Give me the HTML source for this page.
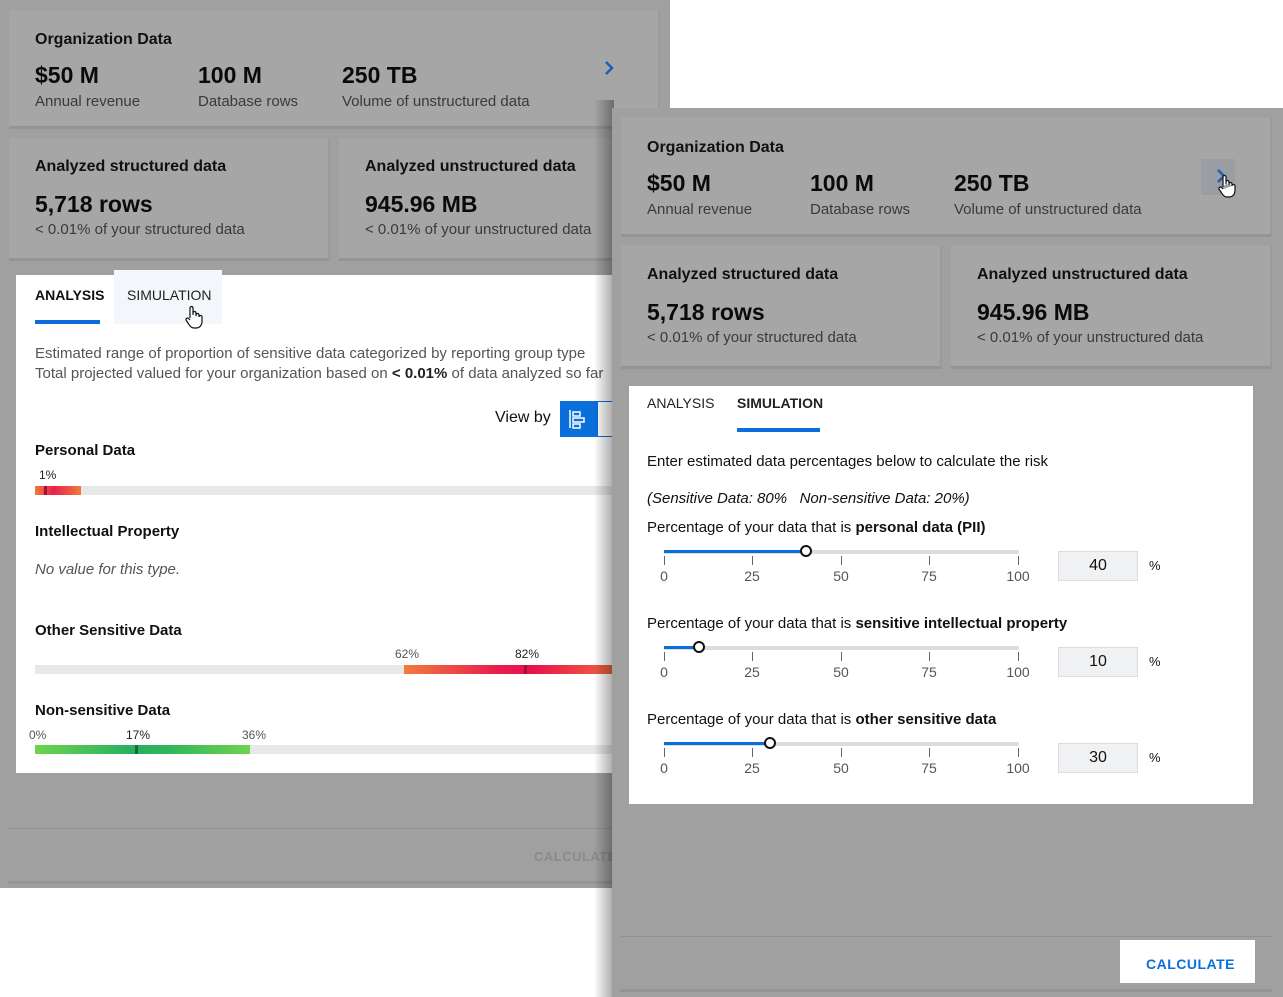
<!DOCTYPE html>
<html><head><meta charset="utf-8"><style>
*{box-sizing:border-box;margin:0;padding:0}
body{width:1283px;height:997px;background:#fff;position:relative;overflow:hidden;font-family:"Liberation Sans",sans-serif;color:#111}
.panel{position:absolute;background:#a0a0a0}
.card{position:absolute;background:#a6a6a6;border-bottom:3px solid #949494;border-right:2px solid #9a9a9a}
.t{position:absolute;white-space:nowrap}
.h{font-size:16px;font-weight:bold;color:#111}
.big{font-size:23px;font-weight:bold;color:#0a0a0a}
.sub{font-size:15px;color:#3a3a3a}
.white{position:absolute;background:#fff}
.bar{position:absolute;height:9px;background:#e8e8e8}
.seg{position:absolute;height:9px}
.pct{font-size:12px;color:#222}
.tick{position:absolute;width:1px;height:9px;background:#666}
.num{position:absolute;font-size:14px;color:#555;transform:translateX(-50%)}
.track{position:absolute;height:4px;background:#ddd}
.fill{position:absolute;height:3px;background:#0a6fdb}
.knob{position:absolute;width:12px;height:12px;border:2px solid #111;border-radius:50%;background:#fff}
.inp{position:absolute;width:80px;height:30px;background:#f0f1f2;border:1px solid #ddd;font-size:16px;text-align:center;line-height:28px;color:#111}
.hand{position:absolute}
</style></head><body>

<!-- LEFT PANEL -->
<div class="panel" style="left:0;top:0;width:670px;height:888px">
  <div class="card" style="left:9px;top:10px;width:651px;height:119px"></div>
  <div class="t h" style="left:35px;top:31px">Organization Data</div>
  <div class="t big" style="left:35px;top:62px">$50 M</div>
  <div class="t big" style="left:198px;top:62px">100 M</div>
  <div class="t big" style="left:342px;top:62px">250 TB</div>
  <div class="t sub" style="left:35px;top:93px">Annual revenue</div>
  <div class="t sub" style="left:198px;top:93px">Database rows</div>
  <div class="t sub" style="left:342px;top:93px">Volume of unstructured data</div>
  <svg style="position:absolute;left:602px;top:60px" width="14" height="16"><path d="M4 2 L10 8 L4 14" stroke="#1a5fb4" stroke-width="2.5" fill="none"/></svg>

  <div class="card" style="left:9px;top:138px;width:321px;height:123px"></div>
  <div class="card" style="left:339px;top:138px;width:321px;height:123px"></div>
  <div class="t h" style="left:35px;top:158px">Analyzed structured data</div>
  <div class="t big" style="left:35px;top:191px">5,718 rows</div>
  <div class="t sub" style="left:35px;top:221px">&lt; 0.01% of your structured data</div>
  <div class="t h" style="left:365px;top:158px">Analyzed unstructured data</div>
  <div class="t big" style="left:365px;top:191px">945.96 MB</div>
  <div class="t sub" style="left:365px;top:221px">&lt; 0.01% of your unstructured data</div>

  <div class="white" style="left:16px;top:275px;width:640px;height:498px"></div>
  <div style="position:absolute;left:114px;top:270px;width:108px;height:54px;background:#f3f6fb"></div>
  <div class="t" style="left:35px;top:287px;font-size:14px;font-weight:bold">ANALYSIS</div>
  <div style="position:absolute;left:35px;top:320px;width:65px;height:4px;background:#0a6fdb"></div>
  <div class="t" style="left:127px;top:287px;font-size:14px;color:#222">SIMULATION</div>
  <svg class="hand" style="left:184px;top:305px" width="20" height="24" viewBox="0 0 20 24"><path d="M6 13V3a1.5 1.5 0 0 1 3 0v7M9 10V8a1.5 1.5 0 0 1 3 0v3M12 10a1.5 1.5 0 0 1 3 0v2M15 12a1.5 1.5 0 0 1 3 0v4c0 4-2 7-6 7h-2c-3 0-4-2-6-5l-2-3a1.5 1.5 0 0 1 2.5-1.5L6 15" fill="#fff" stroke="#111" stroke-width="1.2"/></svg>
  <div class="t" style="left:35px;top:345px;font-size:15px;color:#555">Estimated range of proportion of sensitive data categorized by reporting group type</div>
  <div class="t" style="left:35px;top:365px;font-size:15px;color:#555">Total projected valued for your organization based on <b style="color:#222">&lt; 0.01%</b> of data analyzed so far</div>
  <div class="t" style="left:495px;top:409px;font-size:16px;color:#111">View by</div>
  <div style="position:absolute;left:560px;top:401px;width:37px;height:36px;background:#0a6fdb"></div>
  <svg style="position:absolute;left:568px;top:409px" width="20" height="20"><path d="M2 1V19M5 3h7v4H5zM5 9h11v4H5zM5 15h7v4H5z" stroke="#fff" stroke-width="1.5" fill="none"/></svg>
  <div style="position:absolute;left:597px;top:401px;width:30px;height:36px;border:1px solid #0a6fdb;background:#fff"></div>

  <div class="t h" style="left:35px;top:442px;font-size:15px">Personal Data</div>
  <div class="t pct" style="left:39px;top:468px">1%</div>
  <div class="bar" style="left:35px;top:486px;width:600px"></div>
  <div class="seg" style="left:35px;top:486px;width:46px;background:linear-gradient(90deg,#f07b3a,#e8204e 40%,#f07b3a)"></div>
  <div class="seg" style="left:44px;top:486px;width:3px;background:#a0103a"></div>

  <div class="t h" style="left:35px;top:523px;font-size:15px">Intellectual Property</div>
  <div class="t" style="left:35px;top:561px;font-size:15px;color:#555;font-style:italic">No value for this type.</div>

  <div class="t h" style="left:35px;top:622px;font-size:15px">Other Sensitive Data</div>
  <div class="t pct" style="left:395px;top:647px;color:#555">62%</div>
  <div class="t pct" style="left:515px;top:647px">82%</div>
  <div class="bar" style="left:35px;top:665px;width:600px"></div>
  <div class="seg" style="left:404px;top:665px;width:230px;background:linear-gradient(90deg,#f07b3a,#e8204e 40%,#e8104e 55%,#f07b3a)"></div>
  <div class="seg" style="left:524px;top:665px;width:3px;background:#a0103a"></div>

  <div class="t h" style="left:35px;top:702px;font-size:15px">Non-sensitive Data</div>
  <div class="t pct" style="left:29px;top:728px;color:#555">0%</div>
  <div class="t pct" style="left:126px;top:728px">17%</div>
  <div class="t pct" style="left:242px;top:728px;color:#555">36%</div>
  <div class="bar" style="left:35px;top:745px;width:600px"></div>
  <div class="seg" style="left:35px;top:745px;width:215px;background:linear-gradient(90deg,#6cd44e,#28b060 45%,#2eb45c 60%,#6cd44e)"></div>
  <div class="seg" style="left:135px;top:745px;width:3px;background:#126b3a"></div>

  <div style="position:absolute;left:8px;top:828px;width:652px;height:1px;background:#929292"></div>
  <div class="t" style="left:534px;top:849px;font-size:13px;font-weight:bold;color:#8a8a8a;letter-spacing:.5px">CALCULATE</div>
  <div style="position:absolute;left:8px;top:881px;width:652px;height:3px;background:#959595"></div>
</div>

<!-- RIGHT PANEL -->
<div style="position:absolute;left:594px;top:100px;width:20px;height:897px;background:linear-gradient(90deg,rgba(0,0,0,0),rgba(0,0,0,.35))"></div>
<div class="panel" style="left:612px;top:108px;width:671px;height:889px;z-index:2">
  <div class="card" style="left:9px;top:10px;width:651px;height:119px"></div>
  <div class="t h" style="left:35px;top:31px">Organization Data</div>
  <div class="t big" style="left:35px;top:62px">$50 M</div>
  <div class="t big" style="left:198px;top:62px">100 M</div>
  <div class="t big" style="left:342px;top:62px">250 TB</div>
  <div class="t sub" style="left:35px;top:93px">Annual revenue</div>
  <div class="t sub" style="left:198px;top:93px">Database rows</div>
  <div class="t sub" style="left:342px;top:93px">Volume of unstructured data</div>
  <div style="position:absolute;left:589px;top:51px;width:34px;height:36px;background:#9a9da2"></div>
  <svg style="position:absolute;left:602px;top:60px" width="14" height="16"><path d="M4 2 L10 8 L4 14" stroke="#1a5fb4" stroke-width="2.5" fill="none"/></svg>
  <svg class="hand" style="left:605px;top:66px" width="20" height="24" viewBox="0 0 20 24"><path d="M6 13V3a1.5 1.5 0 0 1 3 0v7M9 10V8a1.5 1.5 0 0 1 3 0v3M12 10a1.5 1.5 0 0 1 3 0v2M15 12a1.5 1.5 0 0 1 3 0v4c0 4-2 7-6 7h-2c-3 0-4-2-6-5l-2-3a1.5 1.5 0 0 1 2.5-1.5L6 15" fill="#fff" stroke="#111" stroke-width="1.2"/></svg>

  <div class="card" style="left:9px;top:138px;width:321px;height:123px"></div>
  <div class="card" style="left:339px;top:138px;width:321px;height:123px"></div>
  <div class="t h" style="left:35px;top:158px">Analyzed structured data</div>
  <div class="t big" style="left:35px;top:191px">5,718 rows</div>
  <div class="t sub" style="left:35px;top:221px">&lt; 0.01% of your structured data</div>
  <div class="t h" style="left:365px;top:158px">Analyzed unstructured data</div>
  <div class="t big" style="left:365px;top:191px">945.96 MB</div>
  <div class="t sub" style="left:365px;top:221px">&lt; 0.01% of your unstructured data</div>

  <div class="white" style="left:17px;top:278px;width:624px;height:418px"></div>
  <div class="t" style="left:35px;top:287px;font-size:14px;color:#222">ANALYSIS</div>
  <div class="t" style="left:125px;top:287px;font-size:14px;font-weight:bold;color:#222">SIMULATION</div>
  <div style="position:absolute;left:125px;top:320px;width:83px;height:4px;background:#0a6fdb"></div>
  <div class="t" style="left:35px;top:345px;font-size:15px;color:#111">Enter estimated data percentages below to calculate the risk</div>
  <div class="t" style="left:35px;top:382px;font-size:15px;color:#111;font-style:italic">(Sensitive Data: 80%&nbsp;&nbsp; Non-sensitive Data: 20%)</div>

  <div class="t" style="left:35px;top:411px;font-size:15px">Percentage of your data that is <b>personal data (PII)</b></div>
  <div class="track" style="left:52px;top:442px;width:355px"></div>
  <div class="fill" style="left:52px;top:442px;width:142px"></div>
  <div class="knob" style="left:188px;top:437px"></div>
  <div class="tick" style="left:52px;top:448px"></div><div class="tick" style="left:140px;top:448px"></div><div class="tick" style="left:229px;top:448px"></div><div class="tick" style="left:317px;top:448px"></div><div class="tick" style="left:406px;top:448px"></div>
  <div class="num" style="left:52px;top:460px">0</div><div class="num" style="left:140px;top:460px">25</div><div class="num" style="left:229px;top:460px">50</div><div class="num" style="left:317px;top:460px">75</div><div class="num" style="left:406px;top:460px">100</div>
  <div class="inp" style="left:446px;top:443px">40</div>
  <div class="t" style="left:537px;top:450px;font-size:13px">%</div>

  <div class="t" style="left:35px;top:507px;font-size:15px">Percentage of your data that is <b>sensitive intellectual property</b></div>
  <div class="track" style="left:52px;top:538px;width:355px"></div>
  <div class="fill" style="left:52px;top:538px;width:36px"></div>
  <div class="knob" style="left:81px;top:533px"></div>
  <div class="tick" style="left:52px;top:544px"></div><div class="tick" style="left:140px;top:544px"></div><div class="tick" style="left:229px;top:544px"></div><div class="tick" style="left:317px;top:544px"></div><div class="tick" style="left:406px;top:544px"></div>
  <div class="num" style="left:52px;top:556px">0</div><div class="num" style="left:140px;top:556px">25</div><div class="num" style="left:229px;top:556px">50</div><div class="num" style="left:317px;top:556px">75</div><div class="num" style="left:406px;top:556px">100</div>
  <div class="inp" style="left:446px;top:539px">10</div>
  <div class="t" style="left:537px;top:546px;font-size:13px">%</div>

  <div class="t" style="left:35px;top:603px;font-size:15px">Percentage of your data that is <b>other sensitive data</b></div>
  <div class="track" style="left:52px;top:634px;width:355px"></div>
  <div class="fill" style="left:52px;top:634px;width:106px"></div>
  <div class="knob" style="left:152px;top:629px"></div>
  <div class="tick" style="left:52px;top:640px"></div><div class="tick" style="left:140px;top:640px"></div><div class="tick" style="left:229px;top:640px"></div><div class="tick" style="left:317px;top:640px"></div><div class="tick" style="left:406px;top:640px"></div>
  <div class="num" style="left:52px;top:652px">0</div><div class="num" style="left:140px;top:652px">25</div><div class="num" style="left:229px;top:652px">50</div><div class="num" style="left:317px;top:652px">75</div><div class="num" style="left:406px;top:652px">100</div>
  <div class="inp" style="left:446px;top:635px">30</div>
  <div class="t" style="left:537px;top:642px;font-size:13px">%</div>

  <div style="position:absolute;left:8px;top:828px;width:652px;height:1px;background:#929292"></div>
  <div style="position:absolute;left:508px;top:832px;width:135px;height:43px;background:#fff"></div>
  <div class="t" style="left:534px;top:848px;font-size:14px;font-weight:bold;color:#0a6fdb;letter-spacing:.5px">CALCULATE</div>
  <div style="position:absolute;left:8px;top:881px;width:652px;height:3px;background:#959595"></div>
</div>
</body></html>
